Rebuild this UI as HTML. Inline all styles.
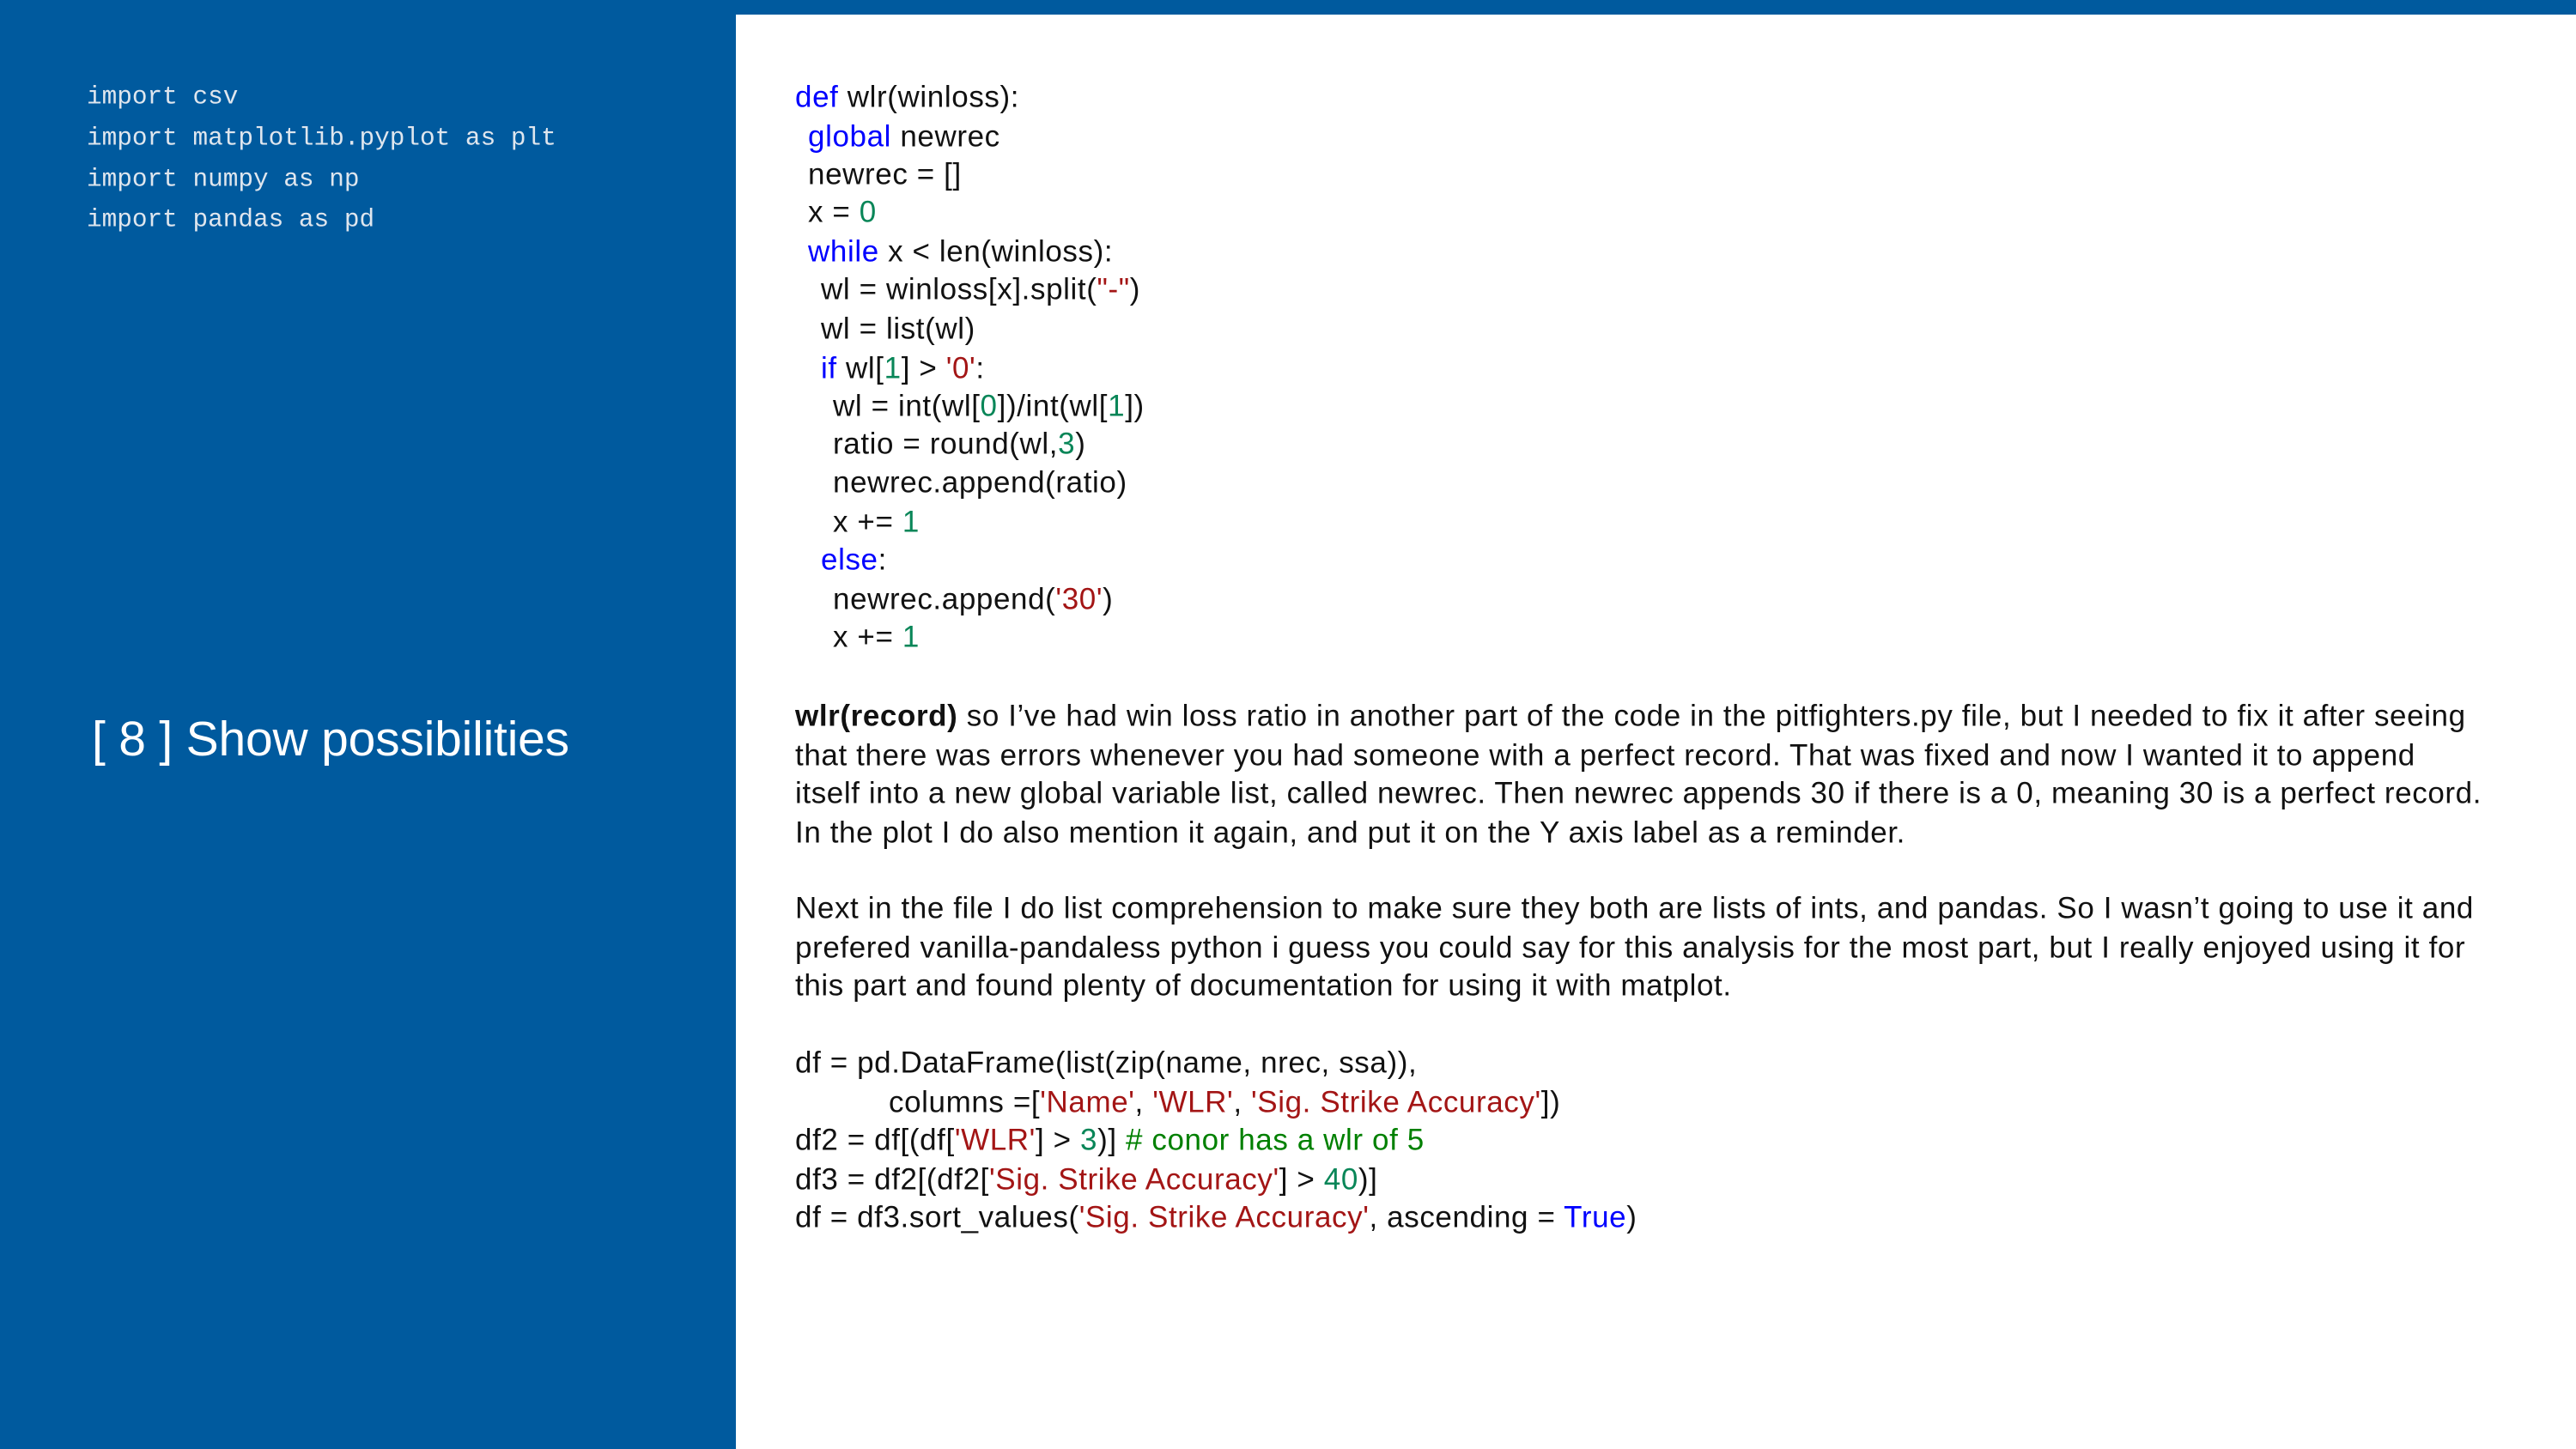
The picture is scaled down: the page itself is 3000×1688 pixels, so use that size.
<!DOCTYPE html>
<html><head><meta charset="utf-8"><style>
html,body{margin:0;padding:0}
body{width:3000px;height:1688px;position:relative;background:#fff;overflow:hidden;font-family:"Liberation Sans",sans-serif}
#top{position:absolute;left:0;top:0;width:3000px;height:17px;background:#005a9e}
#left{position:absolute;left:0;top:0;width:857px;height:1688px;background:#005a9e}
.imp{position:absolute;left:101px;font-family:"Liberation Mono",monospace;font-size:29.4px;color:#dfe6ee;white-space:pre;line-height:1;transform:translateY(-50%)}
#title{position:absolute;left:107px;top:861px;transform:translateY(-50%);color:#fff;font-size:57px;white-space:nowrap;letter-spacing:-0.2px}
.l{position:absolute;left:926px;font-size:35px;line-height:1;color:#111;white-space:pre;transform:translateY(-50%);letter-spacing:0.6px}
.k{color:#0000ff}.n{color:#098658}.s{color:#a31515}.c{color:#008000}
</style></head><body>
<div id="left"></div><div id="top"></div>
<div class="imp" style="top:113px">import csv</div>
<div class="imp" style="top:161px">import matplotlib.pyplot as plt</div>
<div class="imp" style="top:209px">import numpy as np</div>
<div class="imp" style="top:256px">import pandas as pd</div>
<div id="title">[ 8 ] Show possibilities</div>

<div class="l" style="top:113px"><span class="k">def</span> wlr(winloss):</div>
<div class="l" style="top:159px;left:941px"><span class="k">global</span> newrec</div>
<div class="l" style="top:203px;left:941px">newrec = []</div>
<div class="l" style="top:247px;left:941px">x = <span class="n">0</span></div>
<div class="l" style="top:293px;left:941px"><span class="k">while</span> x &lt; len(winloss):</div>
<div class="l" style="top:337px;left:956px">wl = winloss[x].split(<span class="s">"-"</span>)</div>
<div class="l" style="top:383px;left:956px">wl = list(wl)</div>
<div class="l" style="top:429px;left:956px"><span class="k">if</span> wl[<span class="n">1</span>] &gt; <span class="s">'0'</span>:</div>
<div class="l" style="top:473px;left:970px">wl = int(wl[<span class="n">0</span>])/int(wl[<span class="n">1</span>])</div>
<div class="l" style="top:517px;left:970px">ratio = round(wl,<span class="n">3</span>)</div>
<div class="l" style="top:562px;left:970px">newrec.append(ratio)</div>
<div class="l" style="top:608px;left:970px">x += <span class="n">1</span></div>
<div class="l" style="top:652px;left:956px"><span class="k">else</span>:</div>
<div class="l" style="top:698px;left:970px">newrec.append(<span class="s">'30'</span>)</div>
<div class="l" style="top:742px;left:970px">x += <span class="n">1</span></div>

<div class="l" style="top:834px"><b>wlr(record)</b> so I’ve had win loss ratio in another part of the code in the pitfighters.py file, but I needed to fix it after seeing</div>
<div class="l" style="top:880px">that there was errors whenever you had someone with a perfect record. That was fixed and now I wanted it to append</div>
<div class="l" style="top:924px">itself into a new global variable list, called newrec. Then newrec appends 30 if there is a 0, meaning 30 is a perfect record.</div>
<div class="l" style="top:970px">In the plot I do also mention it again, and put it on the Y axis label as a reminder.</div>

<div class="l" style="top:1058px">Next in the file I do list comprehension to make sure they both are lists of ints, and pandas. So I wasn’t going to use it and</div>
<div class="l" style="top:1104px">prefered vanilla-pandaless python i guess you could say for this analysis for the most part, but I really enjoyed using it for</div>
<div class="l" style="top:1148px">this part and found plenty of documentation for using it with matplot.</div>

<div class="l" style="top:1238px">df = pd.DataFrame(list(zip(name, nrec, ssa)),</div>
<div class="l" style="top:1284px;left:1035px">columns =[<span class="s">'Name'</span>, <span class="s">'WLR'</span>, <span class="s">'Sig. Strike Accuracy'</span>])</div>
<div class="l" style="top:1328px">df2 = df[(df[<span class="s">'WLR'</span>] &gt; <span class="n">3</span>)] <span class="c"># conor has a wlr of 5</span></div>
<div class="l" style="top:1374px">df3 = df2[(df2[<span class="s">'Sig. Strike Accuracy'</span>] &gt; <span class="n">40</span>)]</div>
<div class="l" style="top:1418px">df = df3.sort_values(<span class="s">'Sig. Strike Accuracy'</span>, ascending = <span class="k">True</span>)</div>
</body></html>
